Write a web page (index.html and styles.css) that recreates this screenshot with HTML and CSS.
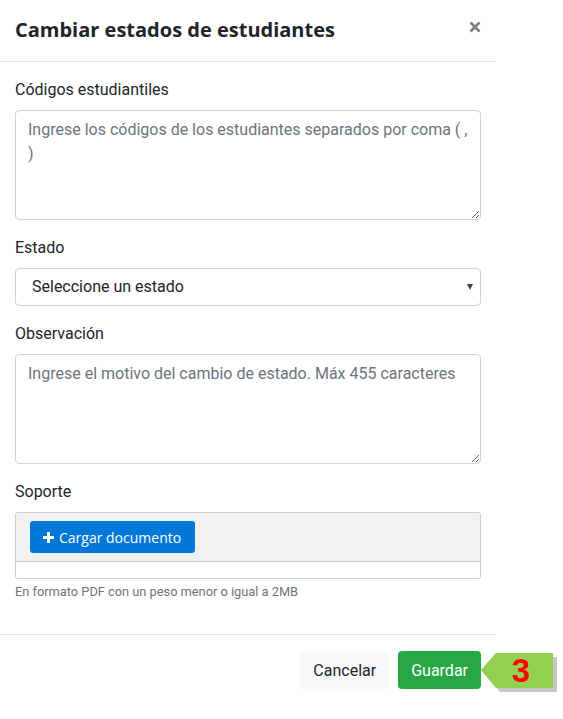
FILE: index.html
```html
<!DOCTYPE html>
<html lang="es">
<head>
<meta charset="utf-8">
<title>Cambiar estados de estudiantes</title>
<link rel="stylesheet" href="styles.css">
</head>
<body>
<div class="modal">
  <div class="modal-header">
    <h5 class="modal-title">Cambiar estados de estudiantes</h5>
    <button class="close" type="button" aria-label="Cerrar">
      <svg width="12" height="12" viewBox="0 0 12 12"><path d="M1.5 1.5 L10.5 10.5 M10.5 1.5 L1.5 10.5" stroke="#808080" stroke-width="2.7" stroke-linecap="butt"/></svg>
    </button>
  </div>
  <div class="modal-body">
    <div class="form-group">
      <label class="label">Códigos estudiantiles</label>
      <textarea class="control area" placeholder="Ingrese los códigos de los estudiantes separados por coma ( , )"></textarea>
    </div>
    <div class="form-group">
      <label class="label">Estado</label>
      <div class="select-wrap">
        <select class="control select">
          <option>Seleccione un estado</option>
        </select>
      </div>
    </div>
    <div class="form-group">
      <label class="label">Observación</label>
      <textarea class="control area" placeholder="Ingrese el motivo del cambio de estado. Máx 455 caracteres"></textarea>
    </div>
    <div class="form-group last">
      <label class="label">Soporte</label>
      <div class="file-box">
        <div class="file-top">
          <button class="btn-upload" type="button"><span class="plus">
            <svg width="11" height="11" viewBox="0 0 11 11"><path d="M5.5 0 V11 M0 5.5 H11" stroke="#fff" stroke-width="3"/></svg>
          </span>Cargar documento</button>
        </div>
        <div class="file-bottom"></div>
      </div>
      <div class="help">En formato PDF con un peso menor o igual a 2MB</div>
    </div>
  </div>
  <div class="modal-footer">
    <button class="btn btn-light" type="button">Cancelar</button>
    <button class="btn btn-success" type="button">Guardar</button>
    <div class="callout">
      <svg class="callout-shape" width="80" height="42" viewBox="0 0 80 42">
        <polygon points="4,21 19,4 76,4 76,39 19,39" fill="#808080" opacity="0.45"/>
        <polygon points="0,17 15,0 72,0 72,35 15,35" fill="#92d050"/>
      </svg>
      <span class="callout-num">3</span>
    </div>
  </div>
</div>
</body>
</html>
```
FILE: styles.css
```css
* { box-sizing: border-box; }
html, body { margin: 0; padding: 0; background: #fff; }
body {
  font-family: Roboto, "Liberation Sans", Arial, sans-serif;
  font-size: 16px;
  color: #212529;
  width: 563px;
  height: 719px;
  overflow: hidden;
}
.modal {
  width: 496px;
  background: #fff;
}
.modal-header {
  height: 62px;
  border-bottom: 1px solid #dee2e6;
  display: flex;
  align-items: center;
  justify-content: space-between;
  padding: 0 15px;
}
.modal-title {
  margin: 0;
  font-family: "Open Sans", "Noto Sans", sans-serif;
  font-weight: 700;
  font-size: 20px;
  line-height: 26px;
  color: #212529;
  padding-bottom: 1px;
}
.close {
  border: 0;
  background: transparent;
  padding: 0;
  margin: 0 0 8px 0;
  width: 12px;
  height: 12px;
  display: flex;
}
.modal-body {
  padding: 16px 15px 15px;
}
.form-group { margin-bottom: 16px; }
.form-group.last { margin-bottom: 18px; }
.label {
  display: block;
  line-height: 23px;
  margin-bottom: 9px;
  color: #212529;
}
.control {
  display: block;
  width: 100%;
  font-family: Roboto, "Liberation Sans", Arial, sans-serif;
  font-size: 16px;
  color: #495057;
  border: 1px solid #ced4da;
  border-radius: 4px;
  background: #fff;
  margin: 0;
}
.area {
  height: 110px;
  padding: 7px 12px 6px;
  line-height: 24px;
  resize: vertical;
}
.area::placeholder { color: #6c757d; opacity: 1; }
.select-wrap { position: relative; }
.select {
  height: 38px;
  padding: 0 16px;
  appearance: none;
  -webkit-appearance: none;
  color: #212529;
  line-height: 36px;
}
.select-wrap::after {
  content: "";
  position: absolute;
  right: 8px;
  top: 16px;
  border-left: 3.5px solid transparent;
  border-right: 3.5px solid transparent;
  border-top: 6px solid #444;
}
.file-box {
  border: 1px solid #cccccc;
  border-radius: 3px;
  overflow: hidden;
}
.file-top {
  background: #f2f2f2;
  padding: 8px 14px;
  border-bottom: 1px solid #cccccc;
}
.file-bottom { height: 16px; background: #fff; }
.btn-upload {
  display: inline-flex;
  align-items: center;
  gap: 5px;
  height: 32px;
  padding: 0 14px 0 13px;
  border: 0;
  border-radius: 3px;
  background: #0078d7;
  color: #fff;
  font-family: "Open Sans", "Noto Sans", sans-serif;
  font-size: 14px;
}
.plus { display: flex; }
.help {
  margin-top: 4px;
  font-size: 12.8px;
  line-height: 18px;
  color: #6c757d;
}
.modal-footer {
  border-top: 1px solid #dee2e6;
  padding: 16px 15px 16px;
  display: flex;
  justify-content: flex-end;
  gap: 9px;
  position: relative;
}
.btn {
  height: 38px;
  border: 0;
  border-radius: 4px;
  font-family: Roboto, "Liberation Sans", Arial, sans-serif;
  font-size: 16px;
  padding: 0 13px;
}
.btn-light { background: #f8f9fa; color: #212529; }
.btn-success { background: #28a745; color: #fff; }
.callout {
  position: absolute;
  left: 481px;
  top: 18px;
  width: 80px;
  height: 42px;
}
.callout-shape { position: absolute; left: 0; top: 0; }
.callout-num {
  position: absolute;
  left: 20px;
  top: 1px;
  width: 40px;
  text-align: center;
  font-family: "Liberation Sans", Arial, sans-serif;
  font-weight: 700;
  font-size: 33px;
  line-height: 34px;
  color: #ff0000;
}
```
